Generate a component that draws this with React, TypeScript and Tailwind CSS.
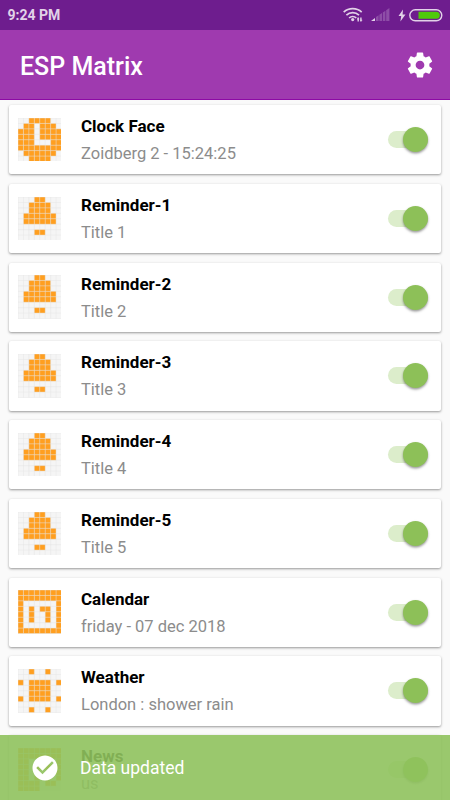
import type { SVGProps } from "react";

type Widget = {
  title: string;
  subtitle: string;
  pixels: string[];
};

const CLOCK = [
  "..####..",
  ".##.###.",
  "###.####",
  "###.####",
  "###...##",
  "########",
  ".######.",
  "..####.."
];

const BELL = [
  "...##...",
  "..####..",
  "..####..",
  ".######.",
  ".######.",
  "........",
  "...##...",
  "........"
];

const CALENDAR = [
  "########",
  "########",
  "#......#",
  "#.#.##.#",
  "#.#..#.#",
  "#.#..#.#",
  "#......#",
  "########"
];

const WEATHER = [
  "..#..#..",
  "........",
  "#.####.#",
  "..####..",
  "..####..",
  "#.####.#",
  "........",
  "..#..#.."
];

const NEWS = [
  "########",
  "########",
  "##.....#",
  "##.#####",
  "##.#..##",
  "##.#.#.#",
  "####.##.",
  "####...."
];

const widgets: Widget[] = [
  { title: "Clock Face", subtitle: "Zoidberg 2 - 15:24:25", pixels: CLOCK },
  { title: "Reminder-1", subtitle: "Title 1", pixels: BELL },
  { title: "Reminder-2", subtitle: "Title 2", pixels: BELL },
  { title: "Reminder-3", subtitle: "Title 3", pixels: BELL },
  { title: "Reminder-4", subtitle: "Title 4", pixels: BELL },
  { title: "Reminder-5", subtitle: "Title 5", pixels: BELL },
  { title: "Calendar", subtitle: "friday - 07 dec 2018", pixels: CALENDAR },
  { title: "Weather", subtitle: "London : shower rain", pixels: WEATHER },
  { title: "News", subtitle: "us", pixels: NEWS }
];

function IconWifi(props: SVGProps<SVGSVGElement>) {
  return (
    <svg width="21" height="16" viewBox="0 0 21 16" fill="none" {...props}>
      <g stroke="currentColor" strokeWidth="1.7">
        <path d="M0.7 5.2a13.2 13.2 0 0 1 18 0" />
        <path d="M3.4 8.2a9.2 9.2 0 0 1 12.6 0" />
        <path d="M6.1 11a5.2 5.2 0 0 1 7.2 0" />
      </g>
      <circle cx="9.7" cy="12.6" r="1.6" fill="currentColor" />
      <path d="M15.2 10.6v3.8M17.9 10.6v3.8" stroke="currentColor" strokeWidth="1.4" />
      <path d="M14 12h2.2M17 13.2h2.2" stroke="currentColor" strokeWidth="1" />
    </svg>
  );
}

function IconSignal(props: SVGProps<SVGSVGElement>) {
  return (
    <svg width="19" height="14" viewBox="0 0 19 14" fill="currentColor" {...props}>
      <path d="M0 13l4-3v3z" />
      <g opacity="0.28">
        <path d="M5 9l2.6-1.7V13H5zM8.4 6.7L11 5v8H8.4zM11.8 4.5l2.6-1.7V13h-2.6zM15.2 2.3L18.4 0v13h-3.2z" />
      </g>
    </svg>
  );
}

function IconBattery(props: SVGProps<SVGSVGElement>) {
  return (
    <svg width="34" height="13" viewBox="0 0 34 13" fill="none" {...props}>
      <rect x="0.8" y="0.8" width="32" height="11" rx="5.5" stroke="currentColor" strokeWidth="1.4" />
      <path d="M9.5 2.8h17.8a3.5 3.5 0 0 1 0 7H9.5z" fill="#4fc90b" />
    </svg>
  );
}

function IconSettings(props: SVGProps<SVGSVGElement>) {
  return (
    <svg viewBox="0 0 24 24" fill="currentColor" {...props}>
      <path d="M19.43 12.98c.04-.32.07-.64.07-.98s-.03-.66-.07-.98l2.11-1.65c.19-.15.24-.42.12-.64l-2-3.46c-.12-.22-.39-.3-.61-.22l-2.49 1c-.52-.4-1.08-.73-1.69-.98l-.38-2.65C14.46 2.18 14.25 2 14 2h-4c-.25 0-.46.18-.49.42l-.38 2.65c-.61.25-1.17.59-1.69.98l-2.49-1c-.23-.09-.49 0-.61.22l-2 3.46c-.13.22-.07.49.12.64l2.11 1.65c-.04.32-.07.65-.07.98s.03.66.07.98l-2.11 1.65c-.19.15-.24.42-.12.64l2 3.46c.12.22.39.3.61.22l2.49-1c.52.4 1.08.73 1.69.98l.38 2.65c.03.24.24.42.49.42h4c.25 0 .46-.18.49-.42l.38-2.65c.61-.25 1.17-.59 1.69-.98l2.49 1c.23.09.49 0 .61-.22l2-3.46c.12-.22.07-.49-.12-.64l-2.11-1.65zM12 15.5c-1.93 0-3.5-1.57-3.5-3.5s1.57-3.5 3.5-3.5 3.5 1.57 3.5 3.5-1.57 3.5-3.5 3.5z" />
    </svg>
  );
}

function IconCheckCircle(props: SVGProps<SVGSVGElement>) {
  return (
    <svg viewBox="0 0 24 24" fill="currentColor" {...props}>
      <path d="M12 2C6.48 2 2 6.48 2 12s4.48 10 10 10 10-4.48 10-10S17.52 2 12 2zm-2 15l-5-5 1.41-1.41L10 14.17l7.59-7.59L19 8l-9 9z" />
    </svg>
  );
}

// 8x8 LED preview, "#" marks a lit pixel.
function MatrixIcon({ pixels }: { pixels: string[] }) {
  return (
    <svg viewBox="0 0 8 8" className="h-[43.5px] w-[43.5px] shrink-0">
      <rect width="8" height="8" fill="#f5f5f5" />
      {pixels.flatMap((row, y) =>
        [...row].map((cell, x) =>
          cell === "#" ? <rect key={`${x}-${y}`} x={x} y={y} width="1" height="1" fill="#ff9f20" /> : null
        )
      )}
      <path
        d="M0 0V8M1 0V8M2 0V8M3 0V8M4 0V8M5 0V8M6 0V8M7 0V8M8 0V8M0 0H8M0 1H8M0 2H8M0 3H8M0 4H8M0 5H8M0 6H8M0 7H8M0 8H8"
        stroke="#e4e4e4"
        strokeOpacity="0.5"
        strokeWidth="0.16"
      />
    </svg>
  );
}

function Toggle() {
  return (
    <span className="flex h-[17px] w-10 shrink-0 items-center justify-end rounded-full bg-[#dcedcb]">
      <span className="h-[25px] w-[25px] shrink-0 rounded-full bg-[#8dc058] shadow-[0_1.5px_2.5px_rgba(0,0,0,0.4)]" />
    </span>
  );
}

function WidgetCard({ title, subtitle, pixels }: Widget) {
  return (
    <li className="flex h-[69.25px] shrink-0 items-center rounded-[2px] bg-white pr-[13px] pl-[8.5px] shadow-[0_1px_2.5px_rgba(0,0,0,0.4)]">
      <MatrixIcon pixels={pixels} />
      <div className="ml-5 flex flex-1 flex-col gap-1 pt-px">
        <h2 className="text-[17px] leading-6 font-bold text-black">{title}</h2>
        <p className="text-[16.5px] leading-6 text-[#8c8c8c]">{subtitle}</p>
      </div>
      <Toggle />
    </li>
  );
}

export default function App() {
  return (
    <div className="relative flex h-[800px] w-[450px] flex-col overflow-hidden bg-[#fafafa] font-['Roboto',sans-serif]">
      <div className="flex h-[30px] shrink-0 items-center bg-[#6e1d8e] pr-[7px] pl-[7.5px] text-[#e2d2e8]">
        <span className="flex-1 pt-px text-[14px] font-bold">9:24 PM</span>
        <IconWifi />
        <IconSignal className="ml-[7px]" />
        <svg width="8" height="13" viewBox="0 0 8 13" fill="currentColor" className="ml-2">
          <path d="M5 0.5L0.5 7H3.2L2.4 12.5L7.5 5.6H4.6z" />
        </svg>
        <IconBattery className="ml-[3px]" />
      </div>

      <header className="flex h-[70px] shrink-0 items-center justify-between border-b border-[#8d0aa5] bg-[#9f3aaf] pr-[15px] pl-5 text-white">
        <h1 className="pt-1 text-[25px] font-medium">ESP Matrix</h1>
        <IconSettings className="h-[30px] w-[30px]" />
      </header>

      <ul className="flex flex-1 flex-col gap-[9.5px] px-[9px] pt-[5px]">
        {widgets.map((widget) => (
          <WidgetCard key={widget.title} {...widget} />
        ))}
      </ul>

      <div className="absolute inset-x-0 bottom-0 flex h-[65px] items-center bg-[#8fc25d]/90 pl-[30px] text-white">
        <IconCheckCircle className="h-[30px] w-[30px]" />
        <span className="ml-5 pt-0.5 text-[17.5px]">Data updated</span>
      </div>
    </div>
  );
}
